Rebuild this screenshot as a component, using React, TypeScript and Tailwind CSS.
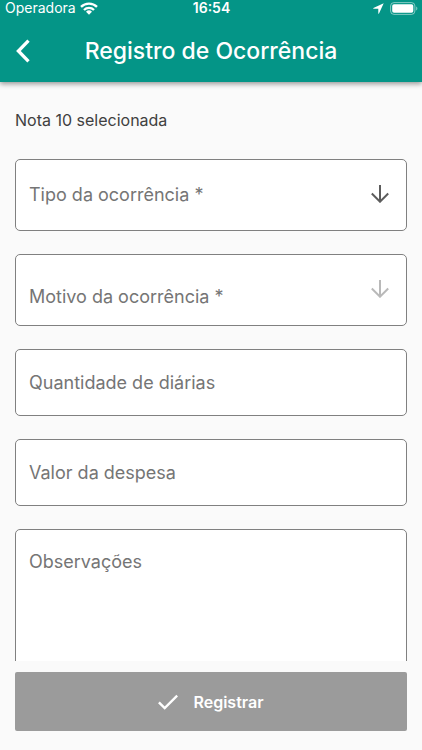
import React, { useState } from "react";

const MOTIVOS: Record<string, string[]> = {
  Atraso: ["Trânsito", "Veículo quebrado"],
  Devolução: ["Produto avariado", "Pedido incorreto"],
};

const fieldClass =
  "block w-full rounded-[5px] border border-[#808080] bg-white px-[13px] text-lg text-[#404040] placeholder:text-[#757575] placeholder:opacity-100 outline-none focus:border-[#049587]";

const StatusBar = () => (
  <div className="grid grid-cols-3 items-center h-4 pl-[5px] pr-1 text-sm leading-4">
    <div className="flex items-center gap-1">
      <span>Operadora</span>
      <svg viewBox="0 0 18 13" className="w-[18px] h-[13px]" fill="none" stroke="currentColor" strokeWidth="2.3">
        <path d="M1 4.9a11.3 11.3 0 0 1 16 0" />
        <path d="M4 8a7 7 0 0 1 10 0" />
        <path d="M9 12.8 6 9.8a4.3 4.3 0 0 1 6 0z" fill="currentColor" stroke="none" />
      </svg>
    </div>
    <span className="text-center font-semibold">16:54</span>
    <div className="flex items-center justify-end gap-[6px]">
      <svg viewBox="0 0 11 11" className="w-[11px] h-[11px]" fill="currentColor">
        <path d="M10.7.3 6 10.6c-.2.4-.7.3-.7-.1V5.7H.5C.1 5.7 0 5.2.4 5z" />
      </svg>
      <svg viewBox="0 0 28 13" className="w-7 h-[13px]">
        <rect x=".6" y=".6" width="24.3" height="11.8" rx="3.4" fill="none" stroke="#fff" strokeOpacity=".5" />
        <rect x="2.2" y="2.2" width="21.1" height="8.6" rx="1.8" fill="#fff" />
        <path d="M26.2 4.5c1.6.6 1.6 3.4 0 4z" fill="#fff" fillOpacity=".5" />
      </svg>
    </div>
  </div>
);

interface SelectFieldProps {
  label: string;
  value: string;
  options: string[];
  disabled?: boolean;
  className?: string;
  onChange: (value: string) => void;
}

const SelectField: React.FC<SelectFieldProps> = ({
  label,
  value,
  options,
  disabled = false,
  className = "",
  onChange,
}) => (
  <div className="relative">
    <select
      aria-label={label}
      value={value}
      disabled={disabled}
      onChange={(e) => onChange(e.target.value)}
      className={`${fieldClass} h-[72px] appearance-none opacity-100 ${value ? "" : "text-[#757575]"} ${className}`}
    >
      <option value="">{label}</option>
      {options.map((option) => (
        <option key={option} value={option}>
          {option}
        </option>
      ))}
    </select>
    <svg
      viewBox="0 0 18 18"
      className={`pointer-events-none absolute right-[18px] top-[26px] w-[18px] h-[18px] ${
        disabled ? "text-[#b9b9b9]" : "text-[#5c5c5c]"
      }`}
      fill="none"
      stroke="currentColor"
      strokeWidth="2"
    >
      <path d="M9 0v17M.8 8.5 9 16.7l8.2-8.2" />
    </svg>
  </div>
);

export default function App() {
  const [tipo, setTipo] = useState("");
  const [motivo, setMotivo] = useState("");

  const handleTipo = (value: string) => {
    setTipo(value);
    setMotivo("");
  };

  return (
    <div className="flex flex-col h-dvh bg-[#fafafa] font-[Inter,'Liberation_Sans',sans-serif]">
      <header className="relative shrink-0 bg-[#049587] text-white shadow-[0_2px_5px_rgba(0,0,0,0.4)]">
        <StatusBar />
        <div className="grid grid-cols-[38px_1fr_38px] items-center h-[66px] pt-1 px-1">
          <button type="button" aria-label="Voltar" className="flex items-center justify-center h-10">
            <svg viewBox="0 0 14 24" className="w-[14px] h-6" fill="none" stroke="currentColor" strokeWidth="3.3">
              <path d="M12.5 1.7 2.4 12l10.1 10.3" />
            </svg>
          </button>
          <h1 className="text-center text-[23px] font-medium whitespace-nowrap">
            Registro de Ocorrência
          </h1>
        </div>
      </header>

      <form id="ocorrencia" className="flex-1 min-h-0 overflow-y-auto px-[15px] pt-7 [scrollbar-width:none]">
        <p className="mb-[29px] text-base leading-5 text-[#404040]">Nota 10 selecionada</p>
        <div className="flex flex-col gap-[23px]">
          <SelectField
            label="Tipo da ocorrência *"
            value={tipo}
            options={Object.keys(MOTIVOS)}
            onChange={handleTipo}
          />
          <SelectField
            label="Motivo da ocorrência *"
            value={motivo}
            options={MOTIVOS[tipo] ?? []}
            disabled={!tipo}
            className="pt-[14px]"
            onChange={setMotivo}
          />
          <input
            type="text"
            inputMode="numeric"
            aria-label="Quantidade de diárias"
            placeholder="Quantidade de diárias"
            className={`${fieldClass} h-[67px]`}
          />
          <input
            type="text"
            inputMode="decimal"
            aria-label="Valor da despesa"
            placeholder="Valor da despesa"
            className={`${fieldClass} h-[67px]`}
          />
          <textarea
            rows={6}
            aria-label="Observações"
            placeholder="Observações"
            className={`${fieldClass} shrink-0 resize-none py-[18px]`}
          />
        </div>
      </form>

      <footer className="shrink-0 px-[15px] pt-[11px] pb-[19px]">
        <button
          type="submit"
          form="ocorrencia"
          disabled={!motivo}
          className="flex items-center justify-center gap-[15px] w-full h-[59px] rounded-[2px] bg-[#049587] text-base font-semibold text-white disabled:bg-[#9b9b9b]"
        >
          <svg viewBox="0 0 20 16" className="w-5 h-4" fill="none" stroke="currentColor" strokeWidth="2.4">
            <path d="m.9 8.3 5.8 5.8L19.2 1.6" />
          </svg>
          Registrar
        </button>
      </footer>
    </div>
  );
}
